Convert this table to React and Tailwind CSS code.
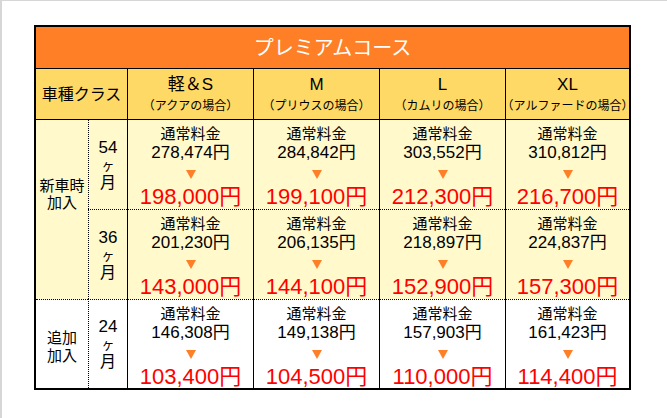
const font = { fontFamily: '"Liberation Sans", "Noto Sans CJK JP", sans-serif' }

const classes = [
  { name: '軽＆S', sub: '（アクアの場合）' },
  { name: 'M', sub: '（プリウスの場合）' },
  { name: 'L', sub: '（カムリの場合）' },
  { name: 'XL', sub: '（アルファードの場合）' },
]

const rows = [
  { months: '54', bg: 'bg-[#fff9cc]', prices: [['278,474', '198,000'], ['284,842', '199,100'], ['303,552', '212,300'], ['310,812', '216,700']] },
  { months: '36', bg: 'bg-[#fff9cc]', prices: [['201,230', '143,000'], ['206,135', '144,100'], ['218,897', '152,900'], ['224,837', '157,300']] },
  { months: '24', bg: 'bg-white', prices: [['146,308', '103,400'], ['149,138', '104,500'], ['157,903', '110,000'], ['161,423', '114,400']] },
]

function PriceCell({ normal, price, bg, topBorder }) {
  return (
    <div className={`${bg} flex flex-col items-center pt-[5px] text-black border-l border-black ${topBorder ? 'border-t [border-top-style:dotted]' : ''}`}>
      <div className="text-[15px] leading-[18px]">通常料金</div>
      <div className="text-[17px] leading-[19px]">{normal}円</div>
      <div className="mt-[8px] h-0 w-0 border-x-[5px] border-t-[9px] border-x-transparent border-t-[#ff7f27]" />
      <div className="mt-[5px] text-[22px] leading-[26px] text-[#ff0000]">{price}円</div>
    </div>
  )
}

function Months({ n, bg, topBorder }) {
  return (
    <div className={`${bg} flex flex-col items-center justify-center border-l border-dotted border-black text-black ${topBorder ? 'border-t' : ''}`}>
      <div className="text-[17px] leading-[19px]">{n}</div>
      <div className="text-[13px] leading-[17px]">ヶ</div>
      <div className="text-[16px] leading-[18px]">月</div>
    </div>
  )
}

export default function App() {
  return (
    <div className="h-[418px] w-[667px] bg-white border-t border-l-2 border-[#d6d6d6]" style={font}>
      <div className="ml-[32px] mt-[24px] w-[597px] border-2 border-black">
        {/* Title */}
        <div className="h-[42px] bg-[#ff7f27] border-b border-black flex items-center justify-center text-white text-[20px]">
          プレミアムコース
        </div>

        {/* Header row */}
        <div className="grid grid-cols-[91px_126px_126px_126px_124px] h-[51px] bg-[#ffd966] border-b border-black text-black">
          <div className="flex items-center justify-center text-[16px] pt-[2px]">車種クラス</div>
          {classes.map((c) => (
            <div key={c.name} className="border-l border-black flex flex-col items-center pt-[5px]">
              <div className="text-[17px] leading-[22px]">{c.name}</div>
              <div className="text-[12px] leading-[20px] whitespace-nowrap">{c.sub}</div>
            </div>
          ))}
        </div>

        {/* Body */}
        <div className="grid grid-cols-[52px_39px_126px_126px_126px_124px] grid-rows-[89px_90px_89px]">
          <div className="row-span-2 bg-[#fff9cc] flex flex-col items-center pt-[57px] text-[15px] leading-[17px] text-black">
            <div>新車時</div>
            <div>加入</div>
          </div>
          <Months n={rows[0].months} bg={rows[0].bg} />
          {rows[0].prices.map(([a, b], i) => (
            <PriceCell key={i} normal={a} price={b} bg={rows[0].bg} />
          ))}

          <Months n={rows[1].months} bg={rows[1].bg} topBorder />
          {rows[1].prices.map(([a, b], i) => (
            <PriceCell key={i} normal={a} price={b} bg={rows[1].bg} topBorder />
          ))}

          <div className="bg-white border-t border-dotted border-black flex flex-col items-center justify-center pt-[6px] text-[15px] leading-[18px] text-black">
            <div>追加</div>
            <div>加入</div>
          </div>
          <Months n={rows[2].months} bg={rows[2].bg} topBorder />
          {rows[2].prices.map(([a, b], i) => (
            <PriceCell key={i} normal={a} price={b} bg={rows[2].bg} topBorder />
          ))}
        </div>
      </div>
    </div>
  )
}
